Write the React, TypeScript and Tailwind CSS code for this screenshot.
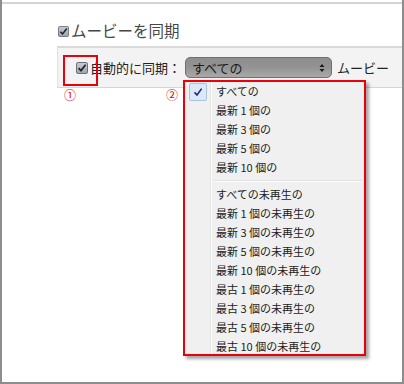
import React from "react";

const jp = { fontFamily: '"Noto Sans CJK JP", "Noto Sans", sans-serif' };

function Check({ size = 12 }: { size?: number }) {
  return (
    <svg width={size} height={size} viewBox="0 0 12 12" className="shrink-0">
      <defs>
        <linearGradient id="cbg" x1="0" y1="0" x2="0" y2="1">
          <stop offset="0" stopColor="#c9ccd2" />
          <stop offset="1" stopColor="#9ea3ab" />
        </linearGradient>
      </defs>
      <rect x="0.5" y="0.5" width="11" height="11" rx="1.5" fill="url(#cbg)" stroke="#6d727a" />
      <path d="M2.6 6.2 L5 8.6 L9.6 2.8" fill="none" stroke="#1f2230" strokeWidth="1.7" />
    </svg>
  );
}

const group1 = ["すべての", "最新 1 個の", "最新 3 個の", "最新 5 個の", "最新 10 個の"];
const group2 = [
  "すべての未再生の",
  "最新 1 個の未再生の",
  "最新 3 個の未再生の",
  "最新 5 個の未再生の",
  "最新 10 個の未再生の",
  "最古 1 個の未再生の",
  "最古 3 個の未再生の",
  "最古 5 個の未再生の",
  "最古 10 個の未再生の",
];

function Item({ label, checked }: { label: string; checked?: boolean }) {
  return (
    <div className="flex items-center h-[19px]">
      <div className="w-[25px] flex justify-center items-center">
        {checked ? (
          <div className="w-[18px] h-[18px] rounded-[2px] border border-[#a9c3e6] bg-[#dde8f7] flex items-center justify-center">
            <svg width="10" height="10" viewBox="0 0 10 10">
              <path d="M1.5 5.4 L4 8 L8.6 1.6" fill="none" stroke="#1c2a86" strokeWidth="1.6" />
            </svg>
          </div>
        ) : null}
      </div>
      <div className="pl-[6px] text-[11px] text-[#222] leading-none whitespace-nowrap" style={jp}>
        {label}
      </div>
    </div>
  );
}

export default function App() {
  return (
    <div className="relative w-[404px] h-[384px] bg-white border-x-2 border-b-2 border-[#8d8d8d] pt-[2px] overflow-hidden" style={jp}>
      <div className="border-t-2 border-[#d4d4d4]" />
      <div className="flex items-center gap-[2px] ml-[56px] mt-[17px] h-[20px]">
        <Check size={11} />
        <span className="text-[15.5px] text-[#474747] leading-none whitespace-nowrap">ムービーを同期</span>
      </div>
      <div className="ml-[55px] mt-[5px] h-[42px] bg-[#f3f3f3] border-t-2 border-l border-b border-t-[#dadada] border-l-[#e2e2e2] border-b-[#d6d6d6] flex items-center pl-[18px] whitespace-nowrap">
        <Check size={12} />
        <span className="ml-[2px] text-[13px] text-[#222] leading-none">自動的に同期：</span>
        <div className="ml-[4px] shrink-0 w-[147px] h-[21px] rounded-[5px] border border-[#6f6f6f] bg-gradient-to-b from-[#8e8e8e] via-[#939393] to-[#a9a9a9] flex items-center justify-between pl-[6px] pr-[6px]">
          <span className="text-[13px] text-[#1a1a1a] leading-none">すべての</span>
          <svg width="6" height="10" viewBox="0 0 6 10">
            <path d="M0.5 4 L3 1 L5.5 4 Z M0.5 6 L3 9 L5.5 6 Z" fill="#1a1a1a" />
          </svg>
        </div>
        <span className="ml-[5px] text-[13px] text-[#222] leading-none">ムービー</span>
      </div>

      {/* annotation box 1 */}
      <div className="absolute left-[61px] top-[55px] w-[35px] h-[31px] border-2 border-[#e8000b]" />
      <div className="absolute left-[62px] top-[89px] text-[12px] text-[#e8000b] leading-none">①</div>
      <div className="absolute left-[164px] top-[89px] text-[12px] text-[#e8000b] leading-none">②</div>

      {/* dropdown menu */}
      <div className="absolute left-[181px] top-[80px] w-[183px] h-[276px] border-2 border-[#e8000b] bg-[#f0f0f0] shadow-[3px_3px_3px_rgba(0,0,0,0.35)]">
        <div className="absolute left-[25px] top-0 bottom-0 w-[1px] bg-[#e2e3e3]" />
        <div className="absolute left-[26px] top-0 bottom-0 w-[1px] bg-white" />
        <div className="relative">
          {group1.map((l, i) => (
            <Item key={l} label={l} checked={i === 0} />
          ))}
          <div className="ml-[29px] mr-[2px] my-[3px] border-t border-[#e0e0e0] border-b border-b-white" />
          {group2.map((l) => (
            <Item key={l} label={l} />
          ))}
        </div>
      </div>
    </div>
  );
}
